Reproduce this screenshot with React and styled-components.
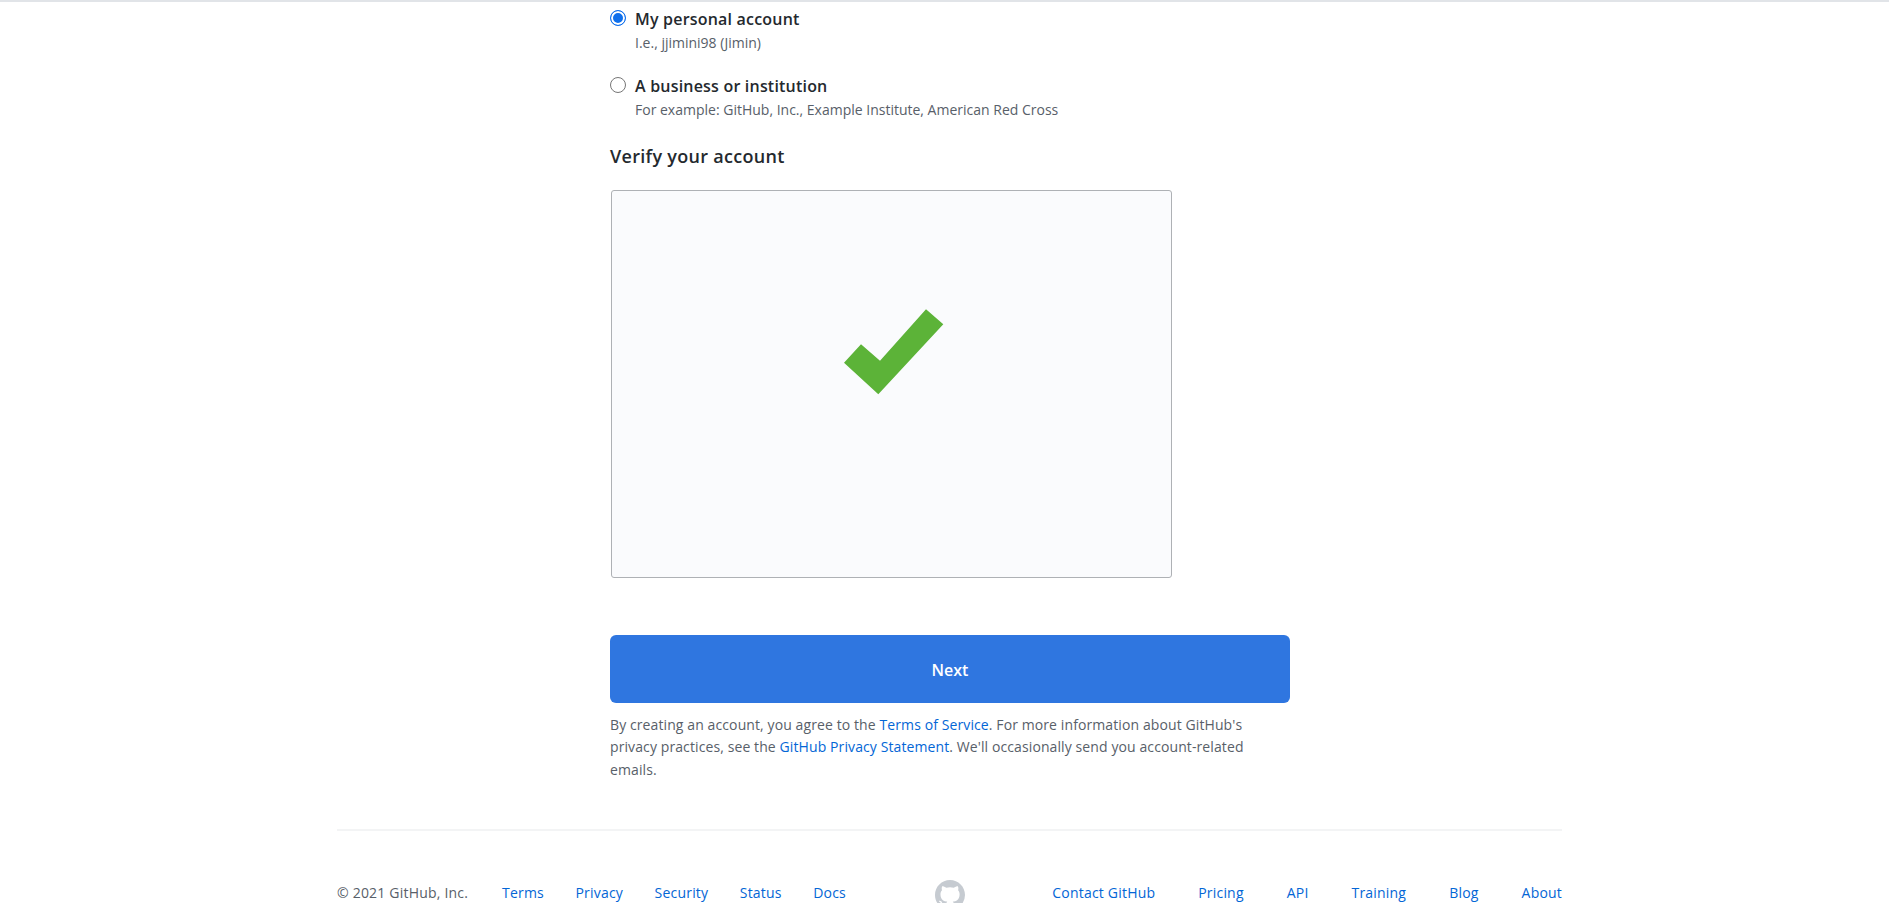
import React from "react";
import styled, { createGlobalStyle } from "styled-components";

const Global = createGlobalStyle`
  html, body { margin: 0; padding: 0; height: 903px; overflow: hidden; background: #fff; }
  body { font-family: "Open Sans", "Noto Sans", sans-serif; color: #24292e; }
`;

const Page = styled.div`
  height: 903px;
  overflow: hidden;
  border-top: 2px solid #e1e4e8;
  box-sizing: border-box;
`;
const Form = styled.form`
  width: 680px;
  margin-left: 610px;
  padding-top: 5px;
`;
const ChoiceGroup = styled.div`
  display: flex;
  flex-direction: column;
  gap: 21px;
  margin-bottom: 21px;
`;
const Choice = styled.label`
  display: grid;
  grid-template-columns: 25px 1fr;
`;
const RadioDot = styled.span`
  width: 16px;
  height: 16px;
  margin-top: 3px;
  box-sizing: border-box;
  border-radius: 50%;
  background: ${(p) => (p.$on ? "#0f6fec" : "#fff")};
  border: ${(p) => (p.$on ? "1.5px solid #0f6fec" : "1px solid #767676")};
  box-shadow: ${(p) => (p.$on ? "inset 0 0 0 2px #fff" : "none")};
`;
const ChoiceTitle = styled.div`
  font-size: 16px;
  font-weight: 600;
  line-height: 24px;
  letter-spacing: 0.2px;
`;
const ChoiceNote = styled.div`
  grid-column: 2;
  margin-top: 2px;
  font-size: 14px;
  line-height: 20px;
  color: #586069;
`;
const SectionTitle = styled.h2`
  margin: 0 0 19px;
  font-size: 18px;
  font-weight: 600;
  line-height: 30px;
  letter-spacing: 0.3px;
`;
const Captcha = styled.div`
  width: 561px;
  height: 388px;
  margin-left: 1px;
  padding: 0 0 64px 4px;
  box-sizing: border-box;
  border: 1px solid #aeb1b5;
  border-radius: 3px;
  background: #fafbfd;
  display: flex;
  align-items: center;
  justify-content: center;
`;
const NextButton = styled.button`
  display: block;
  width: 100%;
  height: 68px;
  margin-top: 57px;
  padding-top: 3px;
  border: 0;
  border-radius: 6px;
  background: #2f76e0;
  color: #fff;
  font-family: inherit;
  font-size: 16px;
  font-weight: 600;
`;
const Legal = styled.p`
  margin: 11px 0 0;
  max-width: 640px;
  font-size: 14px;
  line-height: 22.4px;
  letter-spacing: 0.1px;
  color: #586069;
`;
const Link = styled.a`
  color: #0366d6;
  text-decoration: none;
`;
const Footer = styled.footer`
  width: 1225px;
  margin: 48px 0 0 337px;
  border-top: 2px solid #f3f4f5;
  padding-top: 49px;
  display: grid;
  grid-template-columns: 1fr auto 1fr;
  font-size: 14px;
  line-height: 22px;
  letter-spacing: 0.2px;
`;
const FooterGroup = styled.div`
  display: flex;
  gap: ${(p) => p.$gap}px;
  margin-top: 2px;
  justify-content: ${(p) => p.$align};
`;
const Copyright = styled.span`
  margin-right: 2.5px;
  color: #586069;
`;
const Mark = styled.svg`
  width: 30px;
  height: 30px;
  fill: #c6cbd1;
`;

const App = () => {
  return (
    <>
      <Global />
      <Page>
        <Form>
          <ChoiceGroup>
            <Choice>
              <RadioDot $on />
              <ChoiceTitle>My personal account</ChoiceTitle>
              <ChoiceNote>I.e., jjimini98 (Jimin)</ChoiceNote>
            </Choice>
            <Choice>
              <RadioDot />
              <ChoiceTitle>A business or institution</ChoiceTitle>
              <ChoiceNote>For example: GitHub, Inc., Example Institute, American Red Cross</ChoiceNote>
            </Choice>
          </ChoiceGroup>
          <SectionTitle>Verify your account</SectionTitle>
          <Captcha>
            <svg width="101" height="86" viewBox="843 309 101 86">
              <polygon fill="#5cb338" points="844,362.7 861,344.3 880,360.7 926,309.3 943.3,324.3 878.3,394.3" />
            </svg>
          </Captcha>
          <NextButton type="button">Next</NextButton>
          <Legal>
            By creating an account, you agree to the <Link href="#">Terms of Service</Link>. For more information about GitHub's
            privacy practices, see the <Link href="#">GitHub Privacy Statement</Link>. We'll occasionally send you account-related emails.
          </Legal>
        </Form>
        <Footer>
          <FooterGroup $gap={31.5} $align="flex-start">
            <Copyright>© 2021 GitHub, Inc.</Copyright>
            <Link href="#">Terms</Link>
            <Link href="#">Privacy</Link>
            <Link href="#">Security</Link>
            <Link href="#">Status</Link>
            <Link href="#">Docs</Link>
          </FooterGroup>
          <Mark viewBox="0 0 16 16">
            <path d="M8 0C3.58 0 0 3.58 0 8c0 3.54 2.29 6.53 5.47 7.59.4.07.55-.17.55-.38 0-.19-.01-.82-.01-1.49-2.01.37-2.53-.49-2.69-.94-.09-.23-.48-.94-.82-1.13-.28-.15-.68-.52-.01-.53.63-.01 1.08.58 1.23.82.72 1.21 1.87.87 2.33.66.07-.52.28-.87.51-1.07-1.78-.2-3.64-.89-3.64-3.95 0-.87.31-1.59.82-2.15-.08-.2-.36-1.02.08-2.12 0 0 .67-.21 2.2.82.64-.18 1.32-.27 2-.27.68 0 1.36.09 2 .27 1.53-1.04 2.2-.82 2.2-.82.44 1.1.16 1.92.08 2.12.51.56.82 1.27.82 2.15 0 3.07-1.87 3.75-3.65 3.95.29.25.54.73.54 1.48 0 1.07-.01 1.93-.01 2.2 0 .21.15.46.55.38A8.013 8.013 0 0016 8c0-4.42-3.58-8-8-8z" />
          </Mark>
          <FooterGroup $gap={43} $align="flex-end">
            <Link href="#">Contact GitHub</Link>
            <Link href="#">Pricing</Link>
            <Link href="#">API</Link>
            <Link href="#">Training</Link>
            <Link href="#">Blog</Link>
            <Link href="#">About</Link>
          </FooterGroup>
        </Footer>
      </Page>
    </>
  );
};

export default App;
